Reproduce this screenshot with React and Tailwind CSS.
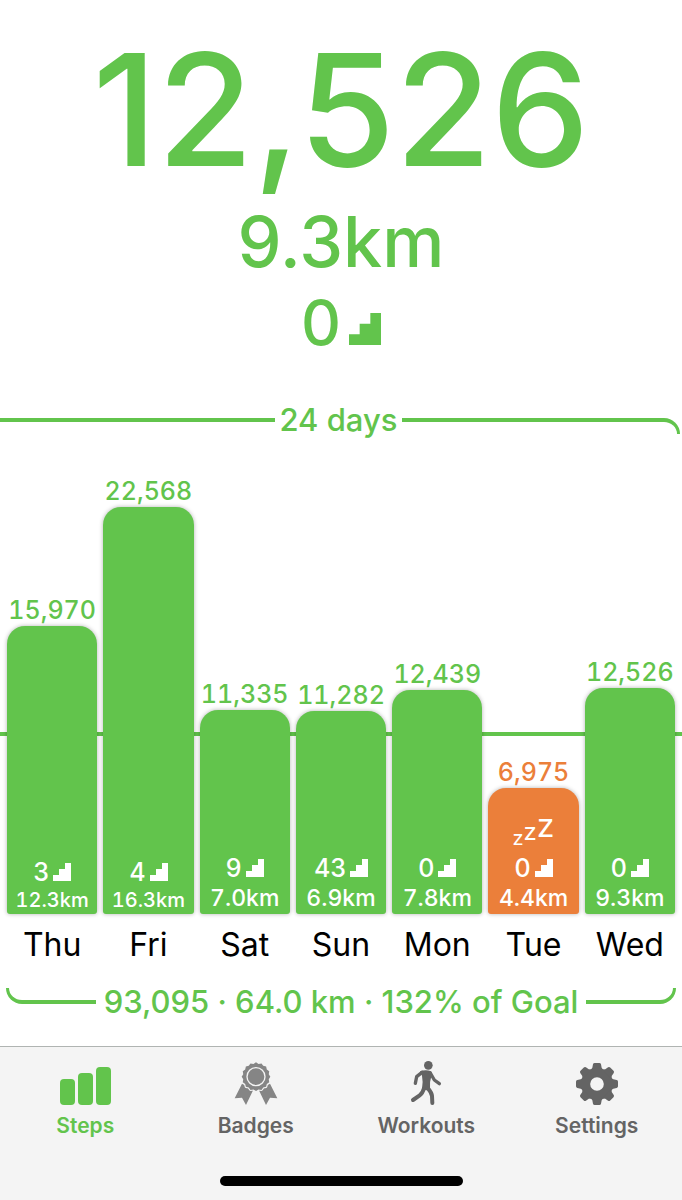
import React from "react";
import clsx from "clsx";

const GOAL = 10000;
const PX_PER_STEP = 0.01803;

const days = [
  { name: "Thu", steps: 15970, floors: 3, km: "12.3km" },
  { name: "Fri", steps: 22568, floors: 4, km: "16.3km" },
  { name: "Sat", steps: 11335, floors: 9, km: "7.0km" },
  { name: "Sun", steps: 11282, floors: 43, km: "6.9km" },
  { name: "Mon", steps: 12439, floors: 0, km: "7.8km" },
  { name: "Tue", steps: 6975, floors: 0, km: "4.4km" },
  { name: "Wed", steps: 12526, floors: 0, km: "9.3km" },
];

const StairsIcon = ({ className }) => (
  <svg viewBox="0 0 3 3" className={className} fill="currentColor" aria-hidden="true">
    <path d="M0 3V2H1V1H2V0H3V3Z" />
  </svg>
);

const StepsIcon = () => (
  <svg viewBox="0 0 52 44" className="h-11 w-13" fill="currentColor" aria-hidden="true">
    <rect x="1" y="18" width="15" height="26" rx="4" />
    <rect x="19" y="12" width="15" height="32" rx="4" />
    <rect x="37" y="6" width="15" height="38" rx="4" />
  </svg>
);

// 16 small points around the rosette
const rosette = Array.from({ length: 32 }, (_, i) => {
  const r = i % 2 ? 39 : 43;
  const a = (i * Math.PI) / 16 - Math.PI / 2;
  return `${(66 + r * Math.cos(a)).toFixed(1)},${(47 + r * Math.sin(a)).toFixed(1)}`;
}).join(" ");

const BadgeIcon = () => (
  <svg viewBox="0 0 132 132" className="size-11 text-[#858585]" fill="currentColor" aria-hidden="true">
    <path d="M24 68L2 112L24 110L36 132L58 86Z" />
    <path d="M108 68L130 112L108 110L96 132L74 86Z" />
    <polygon points={rosette} stroke="#f4f4f4" strokeWidth="7" strokeLinejoin="round" />
    <polygon points={rosette} />
    <circle cx="66" cy="47" r="27" fill="none" stroke="#f4f4f4" strokeWidth="4" />
  </svg>
);

const WalkIcon = () => (
  <svg
    viewBox="0 0 132 132"
    className="size-11"
    fill="none"
    stroke="currentColor"
    strokeLinecap="round"
    strokeLinejoin="round"
    aria-hidden="true"
  >
    <circle cx="73" cy="13" r="13" fill="currentColor" stroke="none" />
    <path
      d="M48 31Q66 24 81 31Q85 34 83 42Q76 62 78 86L66 88L54 84Q58 64 54 44Z"
      fill="currentColor"
      stroke="none"
    />
    <path d="M54 34L38 47L34 67" strokeWidth="10" />
    <path d="M79 36L91 57L106 68" strokeWidth="10" />
    <path d="M60 82Q56 97 47 103L27 117" strokeWidth="12" />
    <path d="M72 82Q83 95 84 105L85 126" strokeWidth="12" />
  </svg>
);

const GearIcon = () => (
  <svg viewBox="0 0 132 132" className="size-11" aria-hidden="true">
    <g transform="translate(66 69)">
      <circle r="34" fill="none" stroke="currentColor" strokeWidth="27" />
      {[0, 45, 90, 135, 180, 225, 270, 315].map((deg) => (
        <path
          key={deg}
          transform={`rotate(${deg})`}
          d="M-19 -42L-14 -49L-12 -59Q-11 -63 -7 -63H7Q11 -63 12 -59L14 -49L19 -42Z"
          fill="currentColor"
        />
      ))}
    </g>
  </svg>
);

const DayBar = ({ day }) => {
  const missed = day.steps < GOAL;
  const long = day.km.length > 5;
  return (
    <div
      className={clsx(
        "flex min-w-0 flex-1 flex-col items-center text-center",
        missed ? "text-[#eb7f3a]" : "text-[#62c44c]"
      )}
    >
      <p className="text-[25px] leading-8 font-medium tabular-nums">
        {day.steps.toLocaleString("en-US")}
      </p>
      <div
        className={clsx(
          "flex w-full flex-col items-center justify-end rounded-t-[18px] rounded-b-[3px] pb-1 shadow-[0_0_4px_rgba(0,0,0,0.3)]",
          missed ? "bg-[#eb7f3a]" : "bg-[#62c44c]"
        )}
        style={{ height: Math.round(day.steps * PX_PER_STEP) }}
      >
        {missed && (
          <div className="mb-1 flex h-6 items-end text-white">
            <span className="text-[20px] leading-4">z</span>
            <span className="pb-1 text-[24px] leading-5">z</span>
            <span className="pb-2 text-[32px] leading-6">z</span>
          </div>
        )}
        <div className="flex items-center gap-1 text-white">
          <span className="text-[25px] leading-9 font-medium">{day.floors}</span>
          <StairsIcon className="size-[18px]" />
        </div>
        <p
          className={clsx(
            "font-medium text-white tabular-nums",
            long ? "text-[20px] leading-5" : "text-[23px] leading-6"
          )}
        >
          {day.km}
        </p>
      </div>
    </div>
  );
};

const TabItem = ({ icon, label, active }) => (
  <button
    type="button"
    className={clsx(
      "flex flex-1 flex-col items-center gap-[5px] text-[21px] leading-8 font-semibold",
      active ? "text-[#62c44c]" : "text-[#646464]"
    )}
  >
    {icon}
    {label}
  </button>
);

export default function App() {
  return (
    <div className="flex min-h-screen flex-col bg-white font-['Inter',sans-serif]">
      <header className="flex flex-col items-center pt-[30px] text-[#62c44c]">
        <h1 className="text-[156px] leading-[160px] font-medium">12,526</h1>
        <p className="mt-3 text-[70px] leading-20 font-medium">9.3km</p>
        <div className="mt-px flex items-baseline gap-2">
          <span className="text-[62px] leading-20 font-medium">0</span>
          <StairsIcon className="size-8" />
        </div>
      </header>

      <div className="mt-[37px] flex h-10 items-start gap-1 pr-[2px] text-[#62c44c]">
        <div className="mt-[18px] h-4 flex-1 border-t-4 border-current" />
        <p className="text-[31px] leading-10 font-medium">24 days</p>
        <div className="mt-[18px] h-4 flex-1 rounded-tr-[16px] border-t-4 border-r-[3px] border-current" />
      </div>

      <section className="relative flex h-[474px] items-end gap-[6px] px-[7px]">
        <div
          className="absolute inset-x-0 h-1 bg-[#62c44c]"
          style={{ bottom: Math.round(GOAL * PX_PER_STEP) - 2 }}
        />
        <div className="relative flex flex-1 items-end gap-[6px]">
          {days.map((day) => (
            <DayBar key={day.name} day={day} />
          ))}
        </div>
      </section>

      <div className="mt-[11px] flex gap-[6px] px-[7px]">
        {days.map((day) => (
          <p key={day.name} className="min-w-0 flex-1 text-center text-[32px] leading-10 text-black">
            {day.name}
          </p>
        ))}
      </div>

      <div className="mt-[17px] mb-6 flex h-10 items-start gap-2 px-[6px] text-[#62c44c]">
        <div className="mt-[6px] h-4 flex-1 rounded-bl-[16px] border-b-4 border-l-[3px] border-current" />
        <p className="text-[31px] leading-10 font-medium">93,095 · 64.0 km · 132% of Goal</p>
        <div className="mt-[6px] h-4 flex-1 rounded-br-[16px] border-r-[3px] border-b-4 border-current" />
      </div>

      <footer className="mt-auto flex h-[154px] flex-col border-t border-[#b0b4b2] bg-[#f4f4f4]">
        <nav className="flex pt-[14px]">
          <TabItem icon={<StepsIcon />} label="Steps" active />
          <TabItem icon={<BadgeIcon />} label="Badges" />
          <TabItem icon={<WalkIcon />} label="Workouts" />
          <TabItem icon={<GearIcon />} label="Settings" />
        </nav>
        <div className="mx-auto mt-auto mb-[14px] h-[10px] w-[243px] rounded-full bg-black" />
      </footer>
    </div>
  );
}
